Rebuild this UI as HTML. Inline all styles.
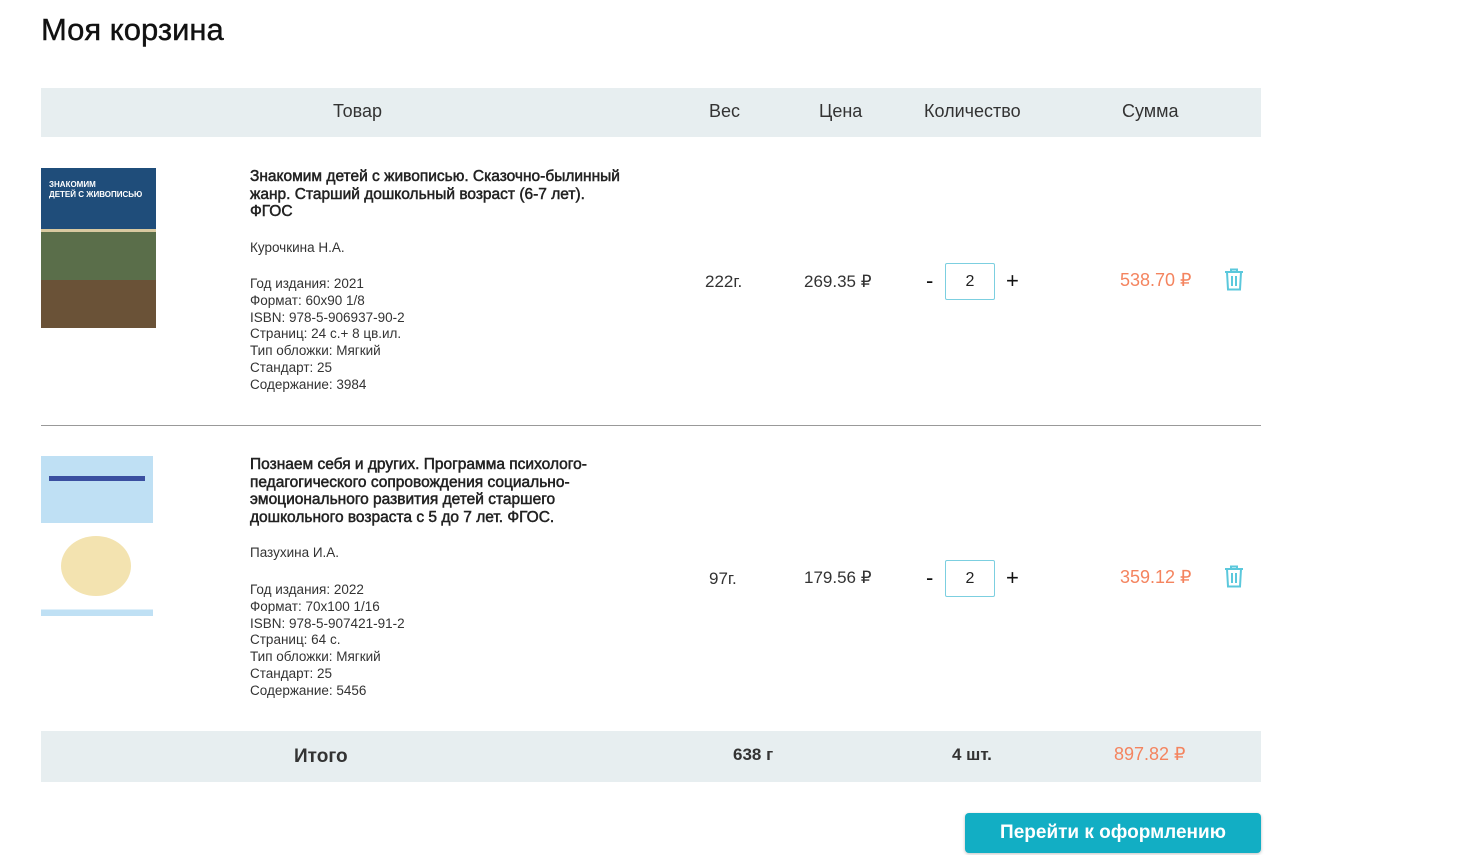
<!DOCTYPE html>
<html><head><meta charset="utf-8"><style>
body{margin:0;background:#fff;font-family:"Liberation Sans",sans-serif;color:#222;width:1461px;height:855px;position:relative;overflow:hidden}
.a{position:absolute;white-space:nowrap}
h1{position:absolute;left:41px;top:12px;margin:0;font-size:31px;font-weight:normal;color:#111;-webkit-text-stroke:0.4px #111}
.band{position:absolute;left:41px;width:1220px;background:#e7eef0}
.hd{font-size:18px;color:#333;top:101px}
.t{font-size:15.5px;font-weight:normal;-webkit-text-stroke:0.5px #222;line-height:17.5px;color:#222}
.d{font-size:13.5px;line-height:16.8px;color:#333;white-space:nowrap}
.num{font-size:17px;color:#333}
.sum{font-size:18px;color:#f4845f}
.box{position:absolute;width:50px;height:37px;border:1px solid #7ccfe0;border-radius:2px;box-sizing:border-box;text-align:center;line-height:35px;font-size:16px}
.pm{font-size:22px;color:#111}
</style></head><body>
<h1>Моя корзина</h1>
<div class="band" style="top:88px;height:49px"></div>
<div class="a hd" style="left:333px">Товар</div>
<div class="a hd" style="left:709px">Вес</div>
<div class="a hd" style="left:819px">Цена</div>
<div class="a hd" style="left:924px">Количество</div>
<div class="a hd" style="left:1122px">Сумма</div>

<div class="a" style="left:41px;top:168px;width:115px;height:160px;background:linear-gradient(#1f4d7a 0 38%,#d8c9a0 38% 40%,#5a6e4a 40% 70%,#6a5237 70%)"><div style="color:#fff;font-size:8px;font-weight:bold;padding:12px 8px;line-height:10px">ЗНАКОМИМ<br>ДЕТЕЙ С ЖИВОПИСЬЮ</div></div>
<div class="a t" style="left:250px;top:168px">Знакомим детей с живописью. Сказочно-былинный<br>жанр. Старший дошкольный возраст (6-7 лет).<br>ФГОС</div>
<div class="a d" style="left:250px;top:240px">Курочкина Н.А.</div>
<div class="a d" style="left:250px;top:276px">Год издания: 2021<br>Формат: 60x90 1/8<br>ISBN: 978-5-906937-90-2<br>Страниц: 24 с.+ 8 цв.ил.<br>Тип обложки: Мягкий<br>Стандарт: 25<br>Содержание: 3984</div>
<div class="a num" style="left:705px;top:272px">222г.</div>
<div class="a num" style="left:804px;top:272px">269.35 ₽</div>
<div class="a pm" style="left:926px;top:268px">-</div>
<div class="box" style="left:945px;top:263px">2</div>
<div class="a pm" style="left:1006px;top:268px">+</div>
<div class="a sum" style="left:1120px;top:270px">538.70 ₽</div>
<svg class="a" style="left:1224px;top:268px" width="20" height="23" viewBox="0 0 20 23" fill="none" stroke="#5bc8dc" stroke-width="2"><path d="M1 4h18M7 4V1.5h6V4M3 4l1 17.5h12L17 4M8 8v10M12 8v10"/></svg>

<div class="a" style="left:41px;top:425px;width:1220px;height:1px;background:#999"></div>

<div class="a" style="left:41px;top:456px;width:112px;height:160px;background:linear-gradient(#bfe0f4 0 42%,#fff 42% 96%,#bfe0f4 96%)"><div style="margin:20px 8px;height:5px;background:#3a4fa0"></div><div style="position:absolute;left:20px;top:80px;width:70px;height:60px;border-radius:50%;background:#f3e3b0"></div></div>
<div class="a t" style="left:250px;top:456px">Познаем себя и других. Программа психолого-<br>педагогического сопровождения социально-<br>эмоционального развития детей старшего<br>дошкольного возраста с 5 до 7 лет. ФГОС.</div>
<div class="a d" style="left:250px;top:545px">Пазухина И.А.</div>
<div class="a d" style="left:250px;top:582px">Год издания: 2022<br>Формат: 70x100 1/16<br>ISBN: 978-5-907421-91-2<br>Страниц: 64 с.<br>Тип обложки: Мягкий<br>Стандарт: 25<br>Содержание: 5456</div>
<div class="a num" style="left:709px;top:569px">97г.</div>
<div class="a num" style="left:804px;top:568px">179.56 ₽</div>
<div class="a pm" style="left:926px;top:565px">-</div>
<div class="box" style="left:945px;top:560px">2</div>
<div class="a pm" style="left:1006px;top:565px">+</div>
<div class="a sum" style="left:1120px;top:567px">359.12 ₽</div>
<svg class="a" style="left:1224px;top:565px" width="20" height="23" viewBox="0 0 20 23" fill="none" stroke="#5bc8dc" stroke-width="2"><path d="M1 4h18M7 4V1.5h6V4M3 4l1 17.5h12L17 4M8 8v10M12 8v10"/></svg>

<div class="band" style="top:731px;height:51px"></div>
<div class="a" style="left:294px;top:746px;font-size:19px;font-weight:bold;color:#333">Итого</div>
<div class="a" style="left:733px;top:745px;font-size:17px;font-weight:bold;color:#333">638 г</div>
<div class="a" style="left:952px;top:745px;font-size:17px;font-weight:bold;color:#333">4 шт.</div>
<div class="a sum" style="left:1114px;top:744px">897.82 ₽</div>
<div class="a" style="left:965px;top:813px;width:296px;height:40px;background:#12aec4;border-radius:4px;color:#fff;font-weight:bold;font-size:19px;text-align:center;line-height:40px;box-shadow:0 1px 3px rgba(0,0,0,.25)">Перейти к оформлению</div>
</body></html>
